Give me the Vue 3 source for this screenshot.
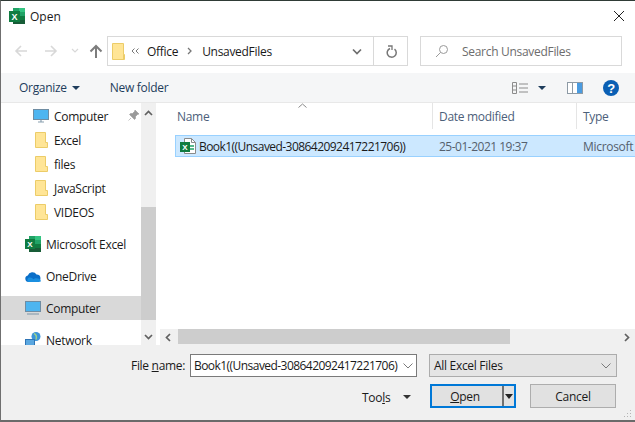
<script setup>
const folders = ['Excel', 'files', 'JavaScript', 'VIDEOS']
</script>

<template>
  <div class="window">
    <header class="titlebar">
      <svg class="app-icon" width="16" height="16" viewBox="0 0 16 16">
        <rect x="4" y="0" width="12" height="16" fill="#21a366" />
        <rect x="10" y="0" width="6" height="4" fill="#33c481" />
        <rect x="10" y="8" width="6" height="4" fill="#107c41" />
        <rect x="4" y="12" width="12" height="4" fill="#185c37" />
        <rect x="0" y="3" width="11" height="11" fill="#107c41" />
        <text x="2.6" y="12" class="x-mark">X</text>
      </svg>
      <span class="title">Open</span>
      <svg class="close" width="12" height="12" viewBox="0 0 12 12">
        <path d="M1 1l10 10M11 1L1 11" stroke="#222" stroke-width="1" fill="none" />
      </svg>
    </header>

    <div class="navbar">
      <div class="nav-buttons">
        <svg width="14" height="14" viewBox="0 0 14 14"><path d="M13 7H2M7 2L2 7l5 5" stroke="#d8d8d8" stroke-width="1.6" fill="none" /></svg>
        <svg width="14" height="14" viewBox="0 0 14 14"><path d="M1 7h11M7 2l5 5-5 5" stroke="#d8d8d8" stroke-width="1.6" fill="none" /></svg>
        <svg width="8" height="6" viewBox="0 0 8 6"><path d="M1 1l3 3 3-3" stroke="#d8d8d8" stroke-width="1.2" fill="none" /></svg>
        <svg width="14" height="14" viewBox="0 0 14 14"><path d="M7 14V2M1.500 7.500L7 2l5.500 5.500" stroke="#7d7d7d" stroke-width="2" fill="none" /></svg>
      </div>
      <div class="address">
        <svg class="folder" width="13" height="17" viewBox="0 0 13 17"><path d="M.5.5h11v11h1v5H.5z" fill="#ffe596" stroke="#eccc68" /><path d="M11.5 11.5v5" stroke="#eccc68" /></svg>
        <svg class="crumb-back" width="8" height="6" viewBox="0 0 8 6"><path d="M3.5.5L1 3l2.500 2.500M7.500.5L5 3l2.500 2.500" stroke="#777" fill="none" /></svg>
        <span class="crumb">Office</span>
        <svg class="crumb-sep" width="5" height="8" viewBox="0 0 5 8"><path d="M1 1l3 3-3 3" stroke="#777" stroke-width="1.300" fill="none" /></svg>
        <span class="crumb">UnsavedFiles</span>
        <div class="address-end">
          <div class="address-drop">
            <svg width="10" height="7" viewBox="0 0 10 7"><path d="M1 1.500l4 4 4-4" stroke="#6d6d6d" stroke-width="1.700" fill="none" /></svg>
          </div>
          <div class="address-refresh">
            <svg width="12" height="13" viewBox="0 0 12 13"><path d="M4.500 2.500a4.500 4.500 0 1 0 4.500 .6" stroke="#777" stroke-width="1.500" fill="none" transform="translate(.5 1)" /><path d="M3 1h4v4" stroke="#777" stroke-width="1.300" fill="none" /></svg>
          </div>
        </div>
      </div>
      <div class="search">
        <svg width="14" height="14" viewBox="0 0 14 14"><circle cx="8.500" cy="5.500" r="4" stroke="#9a9a9a" fill="none" /><path d="M5.500 8.500L1 13" stroke="#9a9a9a" fill="none" /></svg>
        <span>Search UnsavedFiles</span>
      </div>
    </div>

    <div class="toolbar">
      <span class="tool organize">Organize</span>
      <i class="caret"></i>
      <span class="tool newfolder">New folder</span>
      <div class="toolbar-right">
        <svg width="16" height="12" viewBox="0 0 16 12">
          <path d="M.5.500h4v11h-4zM.5 4h4M.5 8h4M7 2h9M7 6h9M7 10h9" stroke="#8c8c8c" fill="none" />
        </svg>
        <i class="caret view-caret"></i>
        <svg class="pane" width="16" height="12" viewBox="0 0 16 12">
          <rect x=".5" y=".5" width="15" height="11" fill="#fff" stroke="#8d9aa5" />
          <rect x="10" y="1" width="5" height="10" fill="#4a9be0" />
          <path d="M5.500 1v10" stroke="#8d9aa5" />
        </svg>
        <svg class="help" width="16" height="16" viewBox="0 0 16 16">
          <circle cx="8" cy="8" r="8" fill="#0a5fb4" />
          <text x="8" y="12.500" class="help-mark">?</text>
        </svg>
      </div>
    </div>

    <div class="body">
      <nav class="sidebar">
        <div class="side-list">
          <div class="side-item indent">
            <svg class="side-pc" width="16" height="14" viewBox="0 0 16 14">
              <rect x=".5" y=".5" width="15" height="10" fill="#4eb5f0" stroke="#6f8da3" />
              <path d="M5 13h6M8 11v2" stroke="#8aa0b0" stroke-width="1.200" />
            </svg>
            <span>Computer</span>
            <svg class="pin" width="11" height="11" viewBox="0 0 11 11"><path d="M7 0l4 4-1.500 .5-2 2 0 2-1 1L1.500 4.500l1-1 2 0 2-2zM3 8L.5 10.500" fill="#9a9a9a" stroke="#9a9a9a" stroke-width=".6" /></svg>
          </div>
          <div v-for="f in folders" :key="f" class="side-item indent">
            <svg class="side-folder" width="13" height="16" viewBox="0 0 13 16"><path d="M.5.500h10v10h2v5H.5z" fill="#ffe596" stroke="#eccc68" /></svg>
            <span>{{ f }}</span>
          </div>
          <div class="side-item group">
            <svg width="16" height="16" viewBox="0 0 16 16">
              <rect x="4" y="0" width="12" height="16" fill="#21a366" />
              <rect x="10" y="0" width="6" height="4" fill="#33c481" />
              <rect x="10" y="8" width="6" height="4" fill="#107c41" />
              <rect x="4" y="12" width="12" height="4" fill="#185c37" />
              <rect x="0" y="3" width="10" height="10" fill="#107c41" />
              <text x="2.300" y="11.200" class="x-mark small">X</text>
            </svg>
            <span>Microsoft Excel</span>
          </div>
          <div class="side-item group">
            <svg width="16" height="11" viewBox="0 0 16 11"><path d="M3.500 11A3.300 3.300 0 0 1 2.800 4.500 4.800 4.800 0 0 1 11.500 3.500 3.800 3.800 0 0 1 12.500 11z" fill="#0a6fc9" /><path d="M3.500 11a2.500 2.500 0 0 1 0-4.200c2-1 4 .2 5 1.500 1.500-1.500 6-1.500 7.500 1.700-.4.600-1.500 1-3.500 1z" fill="#1a8fe0" /></svg>
            <span>OneDrive</span>
          </div>
          <div class="side-item group selected">
            <svg width="16" height="14" viewBox="0 0 16 14">
              <rect x=".5" y=".5" width="15" height="10" fill="#4eb5f0" stroke="#6f8da3" />
              <path d="M2 13h12" stroke="#8aa0b0" stroke-width="1.200" />
            </svg>
            <span>Computer</span>
          </div>
          <div class="side-item group">
            <svg width="16" height="16" viewBox="0 0 16 16">
              <circle cx="11" cy="4.500" r="4.500" fill="#3b94d9" />
              <path d="M9 1.500c2 1 3 3 2 6" stroke="#9bd08a" stroke-width="1.500" fill="none" />
              <rect x=".5" y="7.500" width="9" height="7" fill="#5aa7e0" stroke="#2f74b5" />
              <path d="M3 15.500h4" stroke="#2f74b5" />
            </svg>
            <span>Network</span>
          </div>
        </div>
      </nav>
      <div class="vscroll">
        <svg class="arrow" width="9" height="6" viewBox="0 0 9 6"><path d="M1 5l3.500-3.500L8 5" stroke="#606060" stroke-width="1.700" fill="none" /></svg>
        <div class="vtrack"><div class="vthumb"></div></div>
        <svg class="arrow" width="9" height="6" viewBox="0 0 9 6"><path d="M1 1l3.500 3.500L8 1" stroke="#606060" stroke-width="1.700" fill="none" /></svg>
      </div>

      <main class="files">
        <div class="columns">
          <span class="col col-name">Name
            <svg class="sort" width="9" height="5" viewBox="0 0 9 5"><path d="M.5 4.500l4-3.500 4 3.500" stroke="#8a8a8a" fill="none" /></svg>
          </span>
          <span class="col col-date">Date modified</span>
          <span class="col col-type">Type</span>
        </div>
        <div class="rows">
          <div class="row">
            <svg class="file-icon" width="16" height="16" viewBox="0 0 16 16">
              <path d="M4.500 .5h7l4 4v11h-11z" fill="#fff" stroke="#8a8a8a" />
              <path d="M11.500 .5v4h4" fill="none" stroke="#8a8a8a" />
              <path d="M10 8h4M10 11h4" stroke="#21a366" stroke-width="1.500" />
              <rect x="0" y="4" width="10" height="10" fill="#107c41" />
              <text x="2.300" y="12.200" class="x-mark small">X</text>
            </svg>
            <span class="row-name">Book1((Unsaved-308642092417221706))</span>
            <span class="row-date">25-01-2021 19:37</span>
            <span class="row-type">Microsoft</span>
          </div>
        </div>
        <div class="hscroll">
          <svg class="arrow-h" width="6" height="9" viewBox="0 0 6 9"><path d="M5 1L1.500 4.500 5 8" stroke="#606060" stroke-width="1.700" fill="none" /></svg>
          <div class="hthumb"></div>
          <svg class="arrow-h end" width="6" height="9" viewBox="0 0 6 9"><path d="M1 1l3.500 3.500L1 8" stroke="#606060" stroke-width="1.700" fill="none" /></svg>
        </div>
      </main>
    </div>

    <footer class="footer">
      <div class="file-row">
        <label class="file-label">File <u>n</u>ame:</label>
        <div class="combo">
          <span class="combo-text">Book1((Unsaved-308642092417221706)</span>
          <svg width="10" height="6" viewBox="0 0 10 6"><path d="M.5 .5L5 5 9.500 .5" stroke="#7a7a7a" fill="none" /></svg>
        </div>
        <div class="filter">
          <span>All Excel Files</span>
          <svg width="10" height="6" viewBox="0 0 10 6"><path d="M.5 .5L5 5 9.500 .5" stroke="#7a7a7a" fill="none" /></svg>
        </div>
      </div>
      <div class="action-row">
        <span class="tools">Too<u>l</u>s</span>
        <i class="caret tools-caret"></i>
        <button class="btn open">
          <span class="open-label"><u>O</u>pen</span>
          <span class="open-split"><i class="caret split-caret"></i></span>
        </button>
        <button class="btn cancel">Cancel</button>
      </div>
      <svg class="grip" width="10" height="10" viewBox="0 0 10 10">
        <path d="M8 1h1v1H8zM5 4h1v1H5zM8 4h1v1H8zM2 7h1v1H2zM5 7h1v1H5zM8 7h1v1H8z" fill="#b5b5b5" />
      </svg>
    </footer>
  </div>
</template>

<style>
html, body {
  margin: 0;
  background: #fff;
}
</style>

<style scoped>
.window {
  position: relative;
  width: 635px;
  height: 422px;
  box-sizing: border-box;
  display: flex;
  flex-direction: column;
  overflow: hidden;
  border-top: 1px solid #2f3b36;
  border-left: 1px solid #6f6f6f;
  border-bottom: 2px solid #6a6a6a;
  background: #fff;
  font-family: "Open Sans", "Noto Sans", sans-serif;
  font-size: 12px;
  letter-spacing: -0.3px;
  color: #1a1a1a;
}

.titlebar {
  height: 32px;
  flex: none;
  display: flex;
  align-items: center;
  box-sizing: border-box;
  padding: 0 10px 2px 8px;
}
.app-icon { margin-right: 5px; }
.x-mark {
  font-family: "Liberation Sans", sans-serif;
  font-weight: 700;
  font-size: 9px;
  fill: #fff;
}
.x-mark.small { font-size: 8px; }
.title { font-size: 12px; letter-spacing: 0; }
.close { margin-left: auto; }

.navbar {
  height: 40px;
  flex: none;
  display: flex;
  align-items: flex-start;
  padding-top: 3px;
  box-sizing: border-box;
}
.nav-buttons {
  width: 106px;
  height: 30px;
  flex: none;
  display: flex;
  align-items: center;
  padding-left: 13px;
  box-sizing: border-box;
}
.nav-buttons svg:nth-child(2) { margin-left: 16px; }
.nav-buttons svg:nth-child(3) { margin-left: 13px; }
.nav-buttons svg:nth-child(4) { margin-left: 10px; }

.address {
  width: 301px;
  height: 30px;
  box-sizing: border-box;
  border: 1px solid #d9d9d9;
  display: flex;
  align-items: center;
  padding-left: 4px;
}
.crumb-back { margin: 0 8px 0 6px; }
.crumb-sep { margin: 0 10px 0 9px; }
.address-end {
  margin-left: auto;
  height: 100%;
  display: flex;
}
.address-drop {
  width: 33px;
  display: flex;
  align-items: center;
  justify-content: center;
  border-right: 1px solid #d9d9d9;
}
.address-refresh {
  width: 33px;
  display: flex;
  align-items: center;
  justify-content: center;
}

.search {
  margin-left: 12px;
  width: 202px;
  height: 30px;
  box-sizing: border-box;
  border: 1px solid #d9d9d9;
  display: flex;
  align-items: center;
  padding-left: 14px;
  gap: 13px;
  color: #6d6d6d;
}

.toolbar {
  height: 30px;
  flex: none;
  display: flex;
  align-items: center;
  background: #f5f6f7;
  border-bottom: 1px solid #e8e8e8;
  box-sizing: border-box;
  padding-left: 18px;
  color: #1e3d5c;
}
.caret {
  display: inline-block;
  width: 0;
  height: 0;
  border-left: 4px solid transparent;
  border-right: 4px solid transparent;
  border-top: 4px solid #1e3d5c;
}
.organize + .caret { margin-left: 5px; }
.newfolder { margin-left: 30px; }
.toolbar-right {
  margin-left: auto;
  display: flex;
  align-items: center;
  padding-right: 16px;
}
.view-caret { margin-left: 10px; }
.pane { margin-left: 21px; }
.help { margin-left: 20px; }
.help-mark {
  font-family: "Liberation Sans", sans-serif;
  font-weight: 700;
  font-size: 13px;
  fill: #fff;
  text-anchor: middle;
}

.body {
  flex: 1;
  min-height: 0;
  display: flex;
}
.sidebar {
  width: 140px;
  flex: none;
  overflow: hidden;
}
.side-list { padding-top: 1px; }
.side-item {
  height: 24px;
  display: flex;
  align-items: center;
  position: relative;
}
.side-item.indent .side-pc { margin-left: 32px; margin-right: 5px; }
.side-item.indent .side-folder { margin-left: 34px; margin-right: 6px; }
.side-item.group { margin-top: 8px; padding-left: 24px; }
.side-item.group svg { margin-right: 5px; }
.side-item.selected { background: #d9d9d9; }
.pin { position: absolute; left: 127px; top: 6px; }

.vscroll {
  width: 15px;
  flex: none;
  background: #f0f0f0;
  display: flex;
  flex-direction: column;
  align-items: center;
  padding: 7px 0 5px;
  box-sizing: border-box;
}
.vtrack {
  flex: 1;
  width: 15px;
  display: flex;
  flex-direction: column;
  justify-content: flex-end;
  margin: 6px 0 14px;
}
.vthumb {
  height: 113px;
  background: #cdcdcd;
}

.files {
  flex: 1;
  min-width: 0;
  margin-left: 4px;
  display: flex;
  flex-direction: column;
}
.columns {
  height: 26px;
  flex: none;
  display: flex;
  color: #4c607a;
}
.col {
  display: flex;
  align-items: center;
  position: relative;
  box-sizing: border-box;
  border-right: 1px solid #e5e5e5;
}
.col-name { width: 273px; padding-left: 17px; }
.col-date { width: 144px; padding-left: 6px; }
.col-type { flex: 1; padding-left: 6px; border-right: 0; }
.sort { position: absolute; left: 138px; top: 0; }

.rows {
  flex: 1;
  padding: 6px 0 0 15px;
}
.row {
  height: 22px;
  box-sizing: border-box;
  border: 1px solid #99d1ff;
  border-right: 0;
  background: #cce8ff;
  display: flex;
  align-items: center;
  padding-left: 4px;
  white-space: nowrap;
  overflow: hidden;
}
.file-icon { flex: none; margin-right: 3px; }
.row-name { width: 240px; flex: none; letter-spacing: -0.55px; }
.row-date { width: 144px; flex: none; color: #55606d; letter-spacing: -0.5px; }
.row-type { color: #55606d; }

.hscroll {
  height: 16px;
  flex: none;
  background: #f0f0f0;
  display: flex;
  align-items: center;
  padding-left: 5px;
}
.hthumb {
  width: 332px;
  height: 15px;
  align-self: flex-start;
  margin-left: 7px;
  background: #cdcdcd;
}
.arrow-h.end { margin-left: auto; margin-right: 5px; }

.footer {
  position: relative;
  height: 75px;
  flex: none;
  background: #f0f0f0;
  box-sizing: border-box;
  padding-top: 9px;
}
.file-row {
  display: flex;
  align-items: flex-start;
  padding-left: 130px;
}
.file-label {
  width: 59px;
  line-height: 24px;
  white-space: nowrap;
}
.combo {
  width: 227px;
  height: 23px;
  box-sizing: border-box;
  border: 1px solid #7a7a7a;
  background: #fff;
  display: flex;
  align-items: center;
  justify-content: space-between;
  padding: 0 3px 0 3px;
  white-space: nowrap;
}
.combo-text { letter-spacing: -0.55px; }
.filter {
  margin-left: 12px;
  width: 188px;
  height: 23px;
  box-sizing: border-box;
  border: 1px solid #acacac;
  background: #e5e5e5;
  display: flex;
  align-items: center;
  justify-content: space-between;
  padding: 0 5px 0 4px;
}
.action-row {
  display: flex;
  align-items: center;
  margin-top: 7px;
  padding-left: 361px;
}
.tools { width: 41px; }
.tools-caret { border-top-color: #333; }
.btn {
  height: 24px;
  box-sizing: border-box;
  font: inherit;
  letter-spacing: inherit;
  color: inherit;
  background: #e1e1e1;
  padding: 0;
  position: relative;
  top: -1px;
}
.open {
  width: 86px;
  margin-left: 19px;
  border: 2px solid #0078d7;
  display: flex;
  align-items: center;
}
.open-label { flex: 1; text-align: center; padding-right: 4px; }
.open-split {
  width: 12px;
  height: 100%;
  border-left: 2px solid #707070;
  display: flex;
  align-items: center;
  justify-content: center;
  box-sizing: border-box;
}
.split-caret { border-top-color: #222; border-top-width: 5px; }
.cancel {
  width: 86px;
  margin-left: 14px;
  border: 1px solid #adadad;
}
.grip { position: absolute; right: 3px; bottom: 1px; }
</style>
